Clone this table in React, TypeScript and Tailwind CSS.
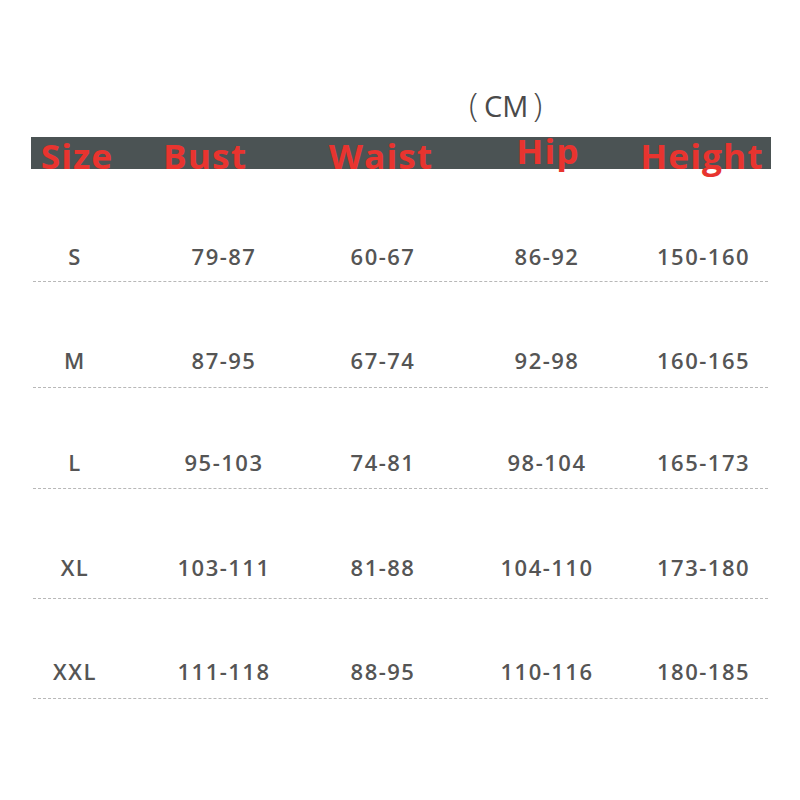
const headers = ['Size', 'Bust', 'Waist', 'Hip', 'Height'];

const rows = [
  { h: 'h-[113px]', pb: 'pb-[10px]', cells: ['S', '79-87', '60-67', '86-92', '150-160'] },
  { h: 'h-[106px]', pb: 'pb-[12px]', cells: ['M', '87-95', '67-74', '92-98', '160-165'] },
  { h: 'h-[101px]', pb: 'pb-[11px]', cells: ['L', '95-103', '74-81', '98-104', '165-173'] },
  { h: 'h-[110px]', pb: 'pb-[16px]', cells: ['XL', '103-111', '81-88', '104-110', '173-180'] },
  { h: 'h-[100px]', pb: 'pb-[12px]', cells: ['XXL', '111-118', '88-95', '110-116', '180-185'] },
];

export default function App() {
  return (
    <div className="w-[800px] h-[800px] bg-white font-['Open_Sans',sans-serif] overflow-hidden">
      {/* unit label */}
      <div className="h-[137px] pt-[86px] pl-[469px]">
        <div className="flex items-center h-[40px] text-[#4a4a4a]">
          <span className="text-[33px] font-light leading-[40px] -mt-[2px]">(</span>
          <span className="ml-[6px] text-[29px] leading-[40px]">CM</span>
          <span className="ml-[5px] text-[33px] font-light leading-[40px] -mt-[2px]">)</span>
        </div>
      </div>

      {/* header bar */}
      <div className="ml-[31px] w-[740px] h-[32px] bg-[#4b5354]">
        <div className="grid grid-cols-[92px_164px_188px_146px_162px] h-full">
          {headers.map((h) => (
            <div
              key={h}
              className={`text-center font-bold text-[34px] tracking-[1px] text-[#e8342f] leading-none whitespace-nowrap scale-x-[1.04] ${
                h === 'Hip' ? 'mt-[-3px]' : 'mt-[2px]'
              }`}
            >
              {h}
            </div>
          ))}
        </div>
      </div>

      {/* rows */}
      <div>
        {rows.map((r, i) => (
          <div key={i} className={`ml-[33px] w-[735px] ${r.h} border-b border-dashed border-[#b8b8b8] flex flex-col justify-end`}>
            <div className={`grid grid-cols-[88px_210px_108px_220px_90px] ${r.pb} -ml-[2px]`}>
              {r.cells.map((c, j) => (
                <div
                  key={j}
                  className="text-center font-semibold text-[22px] leading-[30px] tracking-[1.5px] text-[#555555] whitespace-nowrap"
                >
                  {c}
                </div>
              ))}
            </div>
          </div>
        ))}
      </div>
    </div>
  );
}
